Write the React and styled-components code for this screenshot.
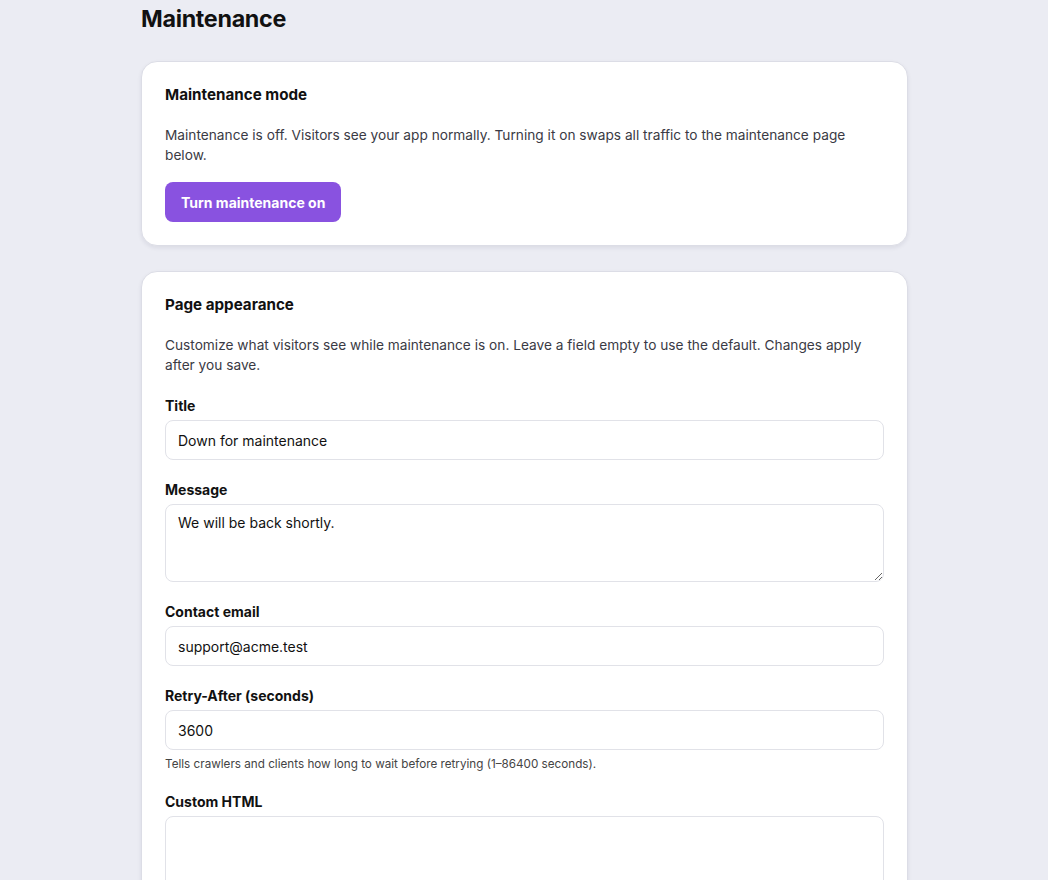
import React from "react";
import styled, {createGlobalStyle} from "styled-components";

const GlobalStyle = createGlobalStyle`
  html, body {
    margin: 0;
    background: #ebecf3;
    font-family: "Inter", "Noto Sans", sans-serif;
    color: #111;
  }
  * { box-sizing: border-box; }
`

const Page = styled.div`
  width: 767px;
  margin: 0 auto 0 141px;
  padding-top: 4px;
`

const Heading = styled.h1`
  font-size: 23.3px;
  line-height: 30px;
  font-weight: 700;
  letter-spacing: -0.3px;
  margin: 0 0 27px;
`

const Card = styled.section`
  background: #fff;
  border: 1px solid #dcdde6;
  border-radius: 16px;
  box-shadow: 0 2px 4px rgba(20, 20, 60, 0.08);
  padding: 22px 23px 23px;
  margin-bottom: 25px;
`

const CardTitle = styled.h2`
  font-size: 15.2px;
  line-height: 22px;
  font-weight: 700;
  margin: 0 0 19px;
`

const Text = styled.p`
  font-size: 13.7px;
  line-height: 20px;
  color: #3a3a44;
  margin: 0 0 ${p => p.$gap || 17}px;
`

const Button = styled.button`
  font-family: inherit;
  font-size: 14px;
  font-weight: 700;
  color: #fff;
  background: #8952e0;
  border: none;
  border-radius: 8px;
  height: 40px;
  padding: 0 16px;
  cursor: pointer;
`

const Field = styled.div`
  display: flex;
  flex-direction: column;
  margin-bottom: 20px;
`

const Label = styled.label`
  font-size: 14px;
  line-height: 20px;
  font-weight: 700;
  margin-bottom: 4px;
`

const Input = styled.input`
  font-family: inherit;
  font-size: 14px;
  color: #111;
  height: 40px;
  padding: 0 12px;
  border: 1px solid #e1e2e8;
  border-radius: 8px;
  background: #fff;
  outline: none;
`

const TextArea = styled.textarea`
  font-family: inherit;
  font-size: 14px;
  line-height: 20px;
  color: #111;
  height: ${p => p.$height || 78}px;
  padding: 8px 12px;
  border: 1px solid #e1e2e8;
  border-radius: 8px;
  background: #fff;
  outline: none;
  resize: vertical;
`

const Hint = styled.span`
  font-size: 11.7px;
  line-height: 16px;
  color: #444;
  margin-top: 6px;
`

export default function App() {
    return (<React.Fragment>
        <GlobalStyle/>
        <Page>
            <Heading>Maintenance</Heading>
            <Card>
                <CardTitle>Maintenance mode</CardTitle>
                <Text>
                    Maintenance is off. Visitors see your app normally. Turning it on swaps all traffic to the maintenance page below.
                </Text>
                <Button>Turn maintenance on</Button>
            </Card>
            <Card>
                <CardTitle>Page appearance</CardTitle>
                <Text $gap={21}>
                    Customize what visitors see while maintenance is on. Leave a field empty to use the default. Changes apply after you save.
                </Text>
                <Field>
                    <Label>Title</Label>
                    <Input defaultValue="Down for maintenance"/>
                </Field>
                <Field>
                    <Label>Message</Label>
                    <TextArea defaultValue="We will be back shortly."/>
                </Field>
                <Field>
                    <Label>Contact email</Label>
                    <Input defaultValue="support@acme.test"/>
                </Field>
                <Field>
                    <Label>Retry-After (seconds)</Label>
                    <Input defaultValue="3600"/>
                    <Hint>Tells crawlers and clients how long to wait before retrying (1–86400 seconds).</Hint>
                </Field>
                <Field>
                    <Label>Custom HTML</Label>
                    <TextArea $height={160}/>
                </Field>
            </Card>
        </Page>
    </React.Fragment>)
}
